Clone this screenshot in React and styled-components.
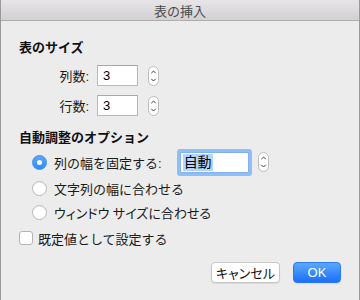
import styled, { createGlobalStyle } from 'styled-components';

const GlobalStyle = createGlobalStyle`
  html, body {
    margin: 0;
    padding: 0;
    background: #ececec;
  }
  body {
    font-family: "Liberation Sans", "Noto Sans CJK JP", sans-serif;
    font-size: 13px;
    color: #1a1a1a;
  }
`;

function Stepper() {
  return (
    <StepperIcon width="11" height="20" viewBox="0 0 11 20">
      <rect x="0.5" y="0.5" width="10" height="19" rx="5" fill="#fff" stroke="#bcbcbc" />
      <path d="M3.3 7.2 L5.5 5 L7.7 7.2" fill="none" stroke="#3c3c3c" strokeWidth="1" />
      <path d="M3.3 12.8 L5.5 15 L7.7 12.8" fill="none" stroke="#3c3c3c" strokeWidth="1" />
    </StepperIcon>
  );
}

function Radio({ checked, label, narrow, children }) {
  return (
    <RadioRow>
      <RadioCircle checked={checked} />
      <OptionLabel $narrow={narrow}>{label}</OptionLabel>
      {children}
    </RadioRow>
  );
}

export default function App() {
  return (
    <Window>
      <GlobalStyle />
      <TitleBar>表の挿入</TitleBar>
      <Body>
        <Heading>表のサイズ</Heading>
        <SizeRows>
          <SizeRow>
            <SizeLabel>列数:</SizeLabel>
            <NumberField>3</NumberField>
            <Stepper />
          </SizeRow>
          <SizeRow>
            <SizeLabel>行数:</SizeLabel>
            <NumberField>3</NumberField>
            <Stepper />
          </SizeRow>
        </SizeRows>

        <Heading $gap={14}>自動調整のオプション</Heading>
        <RadioList>
          <Radio checked label="列の幅を固定する:">
            <WidthField>
              <Selected>自動</Selected>
            </WidthField>
            <Stepper />
          </Radio>
          <Radio label="文字列の幅に合わせる" />
          <Radio narrow label="ウィンドウ サイズに合わせる" />
        </RadioList>

        <CheckRow>
          <CheckBox />
          <span>既定値として設定する</span>
        </CheckRow>

        <Footer>
          <Button>キャンセル</Button>
          <Button primary>OK</Button>
        </Footer>
      </Body>
    </Window>
  );
}

const Window = styled.div`
  width: 360px;
  height: 300px;
  box-sizing: border-box;
  display: flex;
  flex-direction: column;
  border-left: 1px solid #9a9a9a;
  border-right: 1px solid #9a9a9a;
  background: #ececec;
`;

const TitleBar = styled.div`
  height: 20px;
  flex: none;
  display: flex;
  align-items: center;
  justify-content: center;
  background: linear-gradient(#e7e5e7, #d2d0d2);
  border-bottom: 1px solid #aeaeae;
  color: #4b4b4b;
  font-size: 13px;
`;

const Body = styled.div`
  display: flex;
  flex-direction: column;
  padding: 0 18px;
`;

const Heading = styled.div`
  margin-top: ${({ $gap }) => $gap ?? 19}px;
  line-height: 16px;
  font-weight: bold;
  color: #111;
`;

const SizeRows = styled.div`
  margin-top: 9px;
  display: flex;
  flex-direction: column;
  gap: 9px;
`;

const SizeRow = styled.div`
  display: flex;
  align-items: center;
  height: 21px;
`;

const SizeLabel = styled.span`
  width: 70px;
  text-align: right;
  margin-right: 8px;
`;

const NumberField = styled.div`
  box-sizing: border-box;
  width: 41px;
  height: 21px;
  padding: 0 5px;
  display: flex;
  align-items: center;
  background: #fff;
  border: 1px solid #b9b9b9;
  border-top-color: #a8a8a8;
  color: #000;
  margin-right: 10px;
`;

const StepperIcon = styled.svg`
  display: block;
  flex: none;
`;

const RadioList = styled.div`
  margin-top: 2px;
  padding-left: 13px;
  display: flex;
  flex-direction: column;
`;

const RadioRow = styled.div`
  display: flex;
  align-items: center;
  height: 24px;

  &:first-child {
    height: 28px;
  }
`;

const RadioCircle = styled.span`
  box-sizing: border-box;
  width: 15px;
  height: 15px;
  border-radius: 50%;
  margin-right: 7px;
  flex: none;
  position: relative;
  background: ${({ checked }) => (checked ? 'linear-gradient(#5aa8fc, #2f8cf8)' : '#fff')};
  border: 1px solid ${({ checked }) => (checked ? '#3a8ff4' : '#b8b8b8')};
  box-shadow: ${({ checked }) => (checked ? 'none' : 'inset 0 1px 1px rgba(0,0,0,0.06)')};

  &::after {
    content: '';
    display: ${({ checked }) => (checked ? 'block' : 'none')};
    position: absolute;
    left: 4px;
    top: 4px;
    width: 5px;
    height: 5px;
    border-radius: 50%;
    background: #fff;
  }
`;

const OptionLabel = styled.span`
  white-space: nowrap;
  font-feature-settings: ${({ $narrow }) => ($narrow ? '"palt"' : 'normal')};
`;

const WidthField = styled.div`
  box-sizing: border-box;
  width: 69px;
  height: 21px;
  margin-left: 18px;
  margin-right: 9px;
  padding: 0 2px;
  display: flex;
  align-items: center;
  background: #fff;
  border: 1px solid #7fb2ee;
  border-radius: 1px;
  box-shadow: 0 0 0 3px #8fbff6;
`;

const Selected = styled.span`
  background: #b3d5fd;
  color: #000;
  font-size: 14px;
  line-height: 17px;
  padding: 0 1px;
`;

const CheckRow = styled.div`
  margin-top: 2px;
  height: 24px;
  display: flex;
  align-items: center;
  gap: 5px;
`;

const CheckBox = styled.span`
  box-sizing: border-box;
  width: 14px;
  height: 14px;
  border: 1px solid #b5b5b5;
  border-radius: 3px;
  background: #fff;
`;

const Footer = styled.div`
  margin-top: 12px;
  display: flex;
  justify-content: flex-end;
  gap: 13px;
`;

const Button = styled.button`
  box-sizing: border-box;
  height: 21px;
  width: ${({ primary }) => (primary ? '48px' : '69px')};
  padding: 0;
  font-family: inherit;
  font-size: 13px;
  font-feature-settings: "palt";
  border-radius: 4px;
  color: ${({ primary }) => (primary ? '#fff' : '#111')};
  background: ${({ primary }) => (primary ? 'linear-gradient(#5ca8fd, #1a6ff8)' : '#fff')};
  border: 1px solid ${({ primary }) => (primary ? '#2a7af5' : '#c6c6c6')};
  box-shadow: 0 1px 1px rgba(0, 0, 0, 0.08);
`;
